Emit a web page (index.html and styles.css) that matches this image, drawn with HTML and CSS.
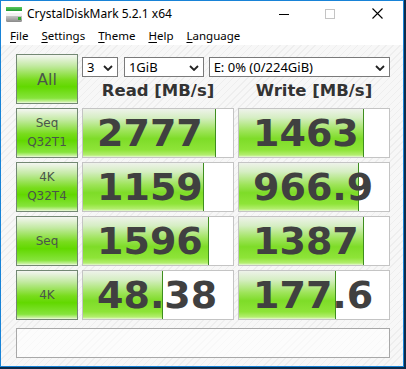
FILE: index.html
```html
<!DOCTYPE html>
<html lang="en">
<head>
  <meta charset="UTF-8" />
  <title>CrystalDiskMark 5.2.1 x64</title>
  <link rel="stylesheet" href="styles.css">
</head>
<body>
  <div class="window">
    <div class="titlebar">
      <svg class="app-icon" width="16" height="16" viewBox="0 0 16 16">
        <defs>
          <linearGradient id="g-top" x1="0" y1="0" x2="0" y2="1">
            <stop offset="0" stop-color="#5cc85c"/>
            <stop offset="1" stop-color="#1f9a35"/>
          </linearGradient>
          <linearGradient id="g-body" x1="0" y1="0" x2="0" y2="1">
            <stop offset="0" stop-color="#e4e4e4"/>
            <stop offset="1" stop-color="#8a8a8a"/>
          </linearGradient>
        </defs>
        <rect x="0" y="0" width="16" height="4" fill="url(#g-top)"/>
        <rect x="0" y="6" width="16" height="9" rx="1.5" fill="url(#g-body)"/>
        <rect x="0" y="6" width="16" height="3" fill="#f2f2f2"/>
        <rect x="12" y="10" width="3" height="3" fill="#2cae2c"/>
      </svg>
      <span class="title">CrystalDiskMark 5.2.1 x64</span>
      <div class="controls">
        <span class="ctl">
          <svg width="10" height="10" viewBox="0 0 10 10"><path d="M0 5.5H10" stroke="#000" stroke-width="1"/></svg>
        </span>
        <span class="ctl">
          <svg width="10" height="10" viewBox="0 0 10 10"><rect x="0.5" y="0.5" width="9" height="9" fill="none" stroke="#c4c4c4" stroke-width="1"/></svg>
        </span>
        <span class="ctl ctl-close">
          <svg width="11" height="11" viewBox="0 0 11 11"><path d="M0.5 0.5L10.5 10.5M10.5 0.5L0.5 10.5" stroke="#000" stroke-width="1.1"/></svg>
        </span>
      </div>
    </div>

    <div class="menubar">
      <span class="menu"><u>F</u>ile</span>
      <span class="menu"><u>S</u>ettings</span>
      <span class="menu"><u>T</u>heme</span>
      <span class="menu"><u>H</u>elp</span>
      <span class="menu"><u>L</u>anguage</span>
    </div>

    <div class="client">
      <div class="board">
        <div class="label label-all">All</div>
        <div class="top">
          <div class="selects">
            <div class="select sel-count">3<svg class="chev" width="10" height="6" viewBox="0 0 10 6"><path d="M1 1L5 5L9 1" fill="none" stroke="#222" stroke-width="1.8"/></svg></div>
            <div class="select sel-size">1GiB<svg class="chev" width="10" height="6" viewBox="0 0 10 6"><path d="M1 1L5 5L9 1" fill="none" stroke="#222" stroke-width="1.8"/></svg></div>
            <div class="select sel-drive">E: 0% (0/224GiB)<svg class="chev" width="10" height="6" viewBox="0 0 10 6"><path d="M1 1L5 5L9 1" fill="none" stroke="#222" stroke-width="1.8"/></svg></div>
          </div>
          <div class="heads">
            <div class="head">Read [MB/s]</div>
            <div class="head">Write [MB/s]</div>
          </div>
        </div>

        <div class="label">Seq<br>Q32T1</div>
        <div class="cell"><div class="bar" style="width:132px"></div><span class="num">2777</span></div>
        <div class="cell"><div class="bar" style="width:124px"></div><span class="num">1463</span></div>

        <div class="label">4K<br>Q32T4</div>
        <div class="cell"><div class="bar" style="width:120px"></div><span class="num">1159</span></div>
        <div class="cell"><div class="bar" style="width:119px"></div><span class="num">966.9</span></div>

        <div class="label">Seq</div>
        <div class="cell"><div class="bar" style="width:125px"></div><span class="num">1596</span></div>
        <div class="cell"><div class="bar" style="width:124px"></div><span class="num">1387</span></div>

        <div class="label">4K</div>
        <div class="cell"><div class="bar" style="width:79px"></div><span class="num">48.38</span></div>
        <div class="cell"><div class="bar" style="width:96px"></div><span class="num">177.6</span></div>
      </div>
      <div class="comment"></div>
    </div>
  </div>
</body>
</html>
```

FILE: styles.css
```css
body {
  margin: 0;
  background-color: #0d2b4a;
  width: 406px;
  height: 369px;
  overflow: hidden;
}
.window {
  width: 402px;
  height: 365px;
  border: 1px solid #1883d7;
  background: #fff;
  display: flex;
  flex-direction: column;
  font-family: 'Noto Sans', 'DejaVu Sans', sans-serif;
}

/* title bar */
.titlebar {
  height: 25px;
  display: flex;
  align-items: center;
  background: #fff;
}
.app-icon {
  margin-left: 5px;
  margin-top: 2px;
}
.title {
  margin-left: 5px;
  font-size: 12px;
  color: #000;
}
.controls {
  margin-left: auto;
  display: flex;
}
.ctl {
  width: 46px;
  height: 25px;
  display: flex;
  align-items: center;
  justify-content: center;
}
.ctl-close {
  width: 48px;
  padding-right: 2px;
}

/* menu */
.menubar {
  height: 19px;
  display: flex;
  align-items: center;
  padding-left: 9px;
  gap: 13px;
  font-size: 11.5px;
  color: #000;
}
.menu u {
  text-decoration-thickness: 1px;
  text-underline-offset: 2px;
}

/* client area */
.client {
  flex: 1;
  padding: 9px 0 0 15px;
  background:
    repeating-linear-gradient(135deg, #f7f7f7 0 2px, #eeeeee 2px 3px, #f7f7f7 3px 5px);
  background-color: #f4f4f4;
}
.board {
  display: grid;
  grid-template-columns: 62px 152px 152px;
  grid-auto-rows: 50px;
  column-gap: 4px;
  row-gap: 4px;
}
.label {
  box-sizing: border-box;
  border: 1px solid #738873;
  background: linear-gradient(to bottom, #f4f6f2 0%, #c4eaa4 22%, #78dc1c 52%, #62d800 66%, #86e43c 90%, #c6f19c 97%, #eefae2 100%);
  color: #4a564a;
  font-family: 'DejaVu Sans', sans-serif;
  font-size: 12px;
  line-height: 19px;
  display: flex;
  align-items: center;
  justify-content: center;
  text-align: center;
}
.label-all {
  font-size: 16px;
}
.top {
  grid-column: 2 / 4;
  display: flex;
  flex-direction: column;
}
.selects {
  margin-top: 3px;
  display: flex;
  height: 20px;
}
.select {
  box-sizing: border-box;
  height: 20px;
  border: 1px solid #7a7a7a;
  background: #fff;
  display: flex;
  align-items: center;
  justify-content: space-between;
  padding: 0 4px 0 4px;
  font-size: 13px;
  color: #000;
}
.sel-count { width: 36px; }
.sel-size { width: 80px; margin-left: 6px; }
.sel-drive { width: 182px; margin-left: 5px; }
.chev { margin-top: 1px; }
.heads {
  display: grid;
  grid-template-columns: 152px 152px;
  column-gap: 4px;
  flex: 1;
}
.head {
  display: flex;
  align-items: center;
  justify-content: center;
  font-family: 'DejaVu Sans', sans-serif;
  font-weight: bold;
  font-size: 16.5px;
  color: #333;
  padding-bottom: 1px;
}

.cell {
  box-sizing: border-box;
  border: 1px solid #c4c4c4;
  background: #fff;
  display: grid;
  grid-template: 1fr / 1fr;
  overflow: hidden;
}
.bar {
  grid-area: 1 / 1;
  border-right: 1px solid #3e8e1e;
  background: linear-gradient(to bottom, #eef2ea 0%, #d6eec4 18%, #9ee45a 45%, #7edc28 62%, #8ee438 85%, #b4ee70 96%, #e8f8d8 100%);
}
.num {
  grid-area: 1 / 1;
  align-self: center;
  padding-left: 14px;
  font-family: 'DejaVu Sans', sans-serif;
  font-weight: bold;
  font-size: 38px;
  line-height: 40px;
  color: #404040;
  white-space: nowrap;
}

.comment {
  box-sizing: border-box;
  margin-top: 8px;
  width: 374px;
  height: 30px;
  border: 1px solid #a8a8a8;
  background: rgba(255, 255, 255, 0.6);
}
```
